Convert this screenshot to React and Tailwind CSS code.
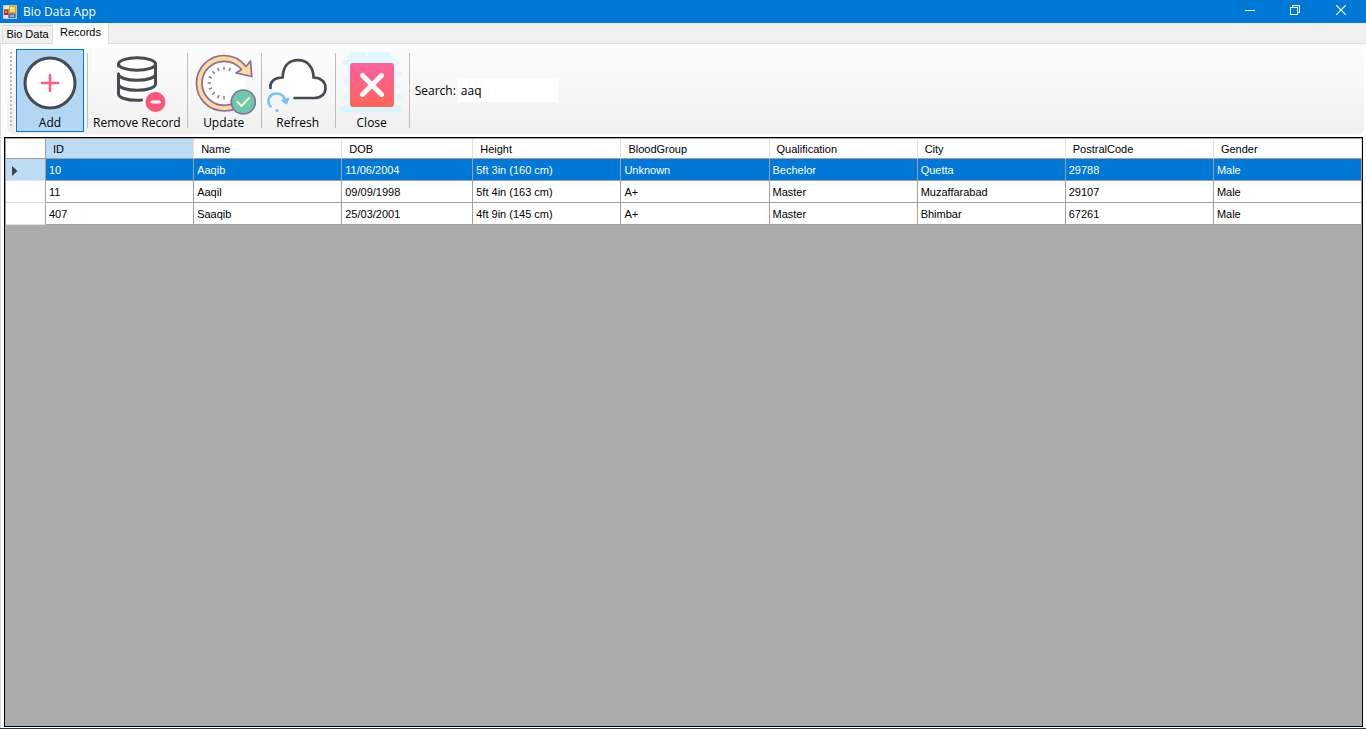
import React, { useState } from "react";

const columns = ["ID", "Name", "DOB", "Height", "BloodGroup", "Qualification", "City", "PostralCode", "Gender"];

const records = [
  ["10", "Aaqib", "11/06/2004", "5ft 3in (160 cm)", "Unknown", "Bechelor", "Quetta", "29788", "Male"],
  ["11", "Aaqil", "09/09/1998", "5ft 4in (163 cm)", "A+", "Master", "Muzaffarabad", "29107", "Male"],
  ["407", "Saaqib", "25/03/2001", "4ft 9in (145 cm)", "A+", "Master", "Bhimbar", "67261", "Male"],
];

function AppIcon() {
  return (
    <svg viewBox="0 0 14 14" className="h-3.5 w-3.5" aria-hidden="true" shapeRendering="crispEdges">
      <rect width="14" height="14" fill="#c9c5bb" />
      <rect x="1" y="1" width="12" height="12" fill="#8f8b80" />
      <rect x="1" y="1" width="5" height="3" fill="#e8e6df" />
      <rect x="1" y="10" width="4" height="3" fill="#e8e6df" />
      <rect x="1" y="5" width="4" height="5" fill="#c02a1c" />
      <rect x="2" y="6" width="2" height="2" fill="#f0907e" />
      <rect x="6" y="1" width="7" height="7" fill="#e5a800" />
      <rect x="7" y="2" width="5" height="5" fill="#ffd84a" />
      <rect x="7" y="2" width="3" height="2" fill="#fff0a8" />
      <rect x="6" y="9" width="6" height="4" fill="#3f6fd0" />
      <rect x="7" y="10" width="4" height="2" fill="#86aef2" />
    </svg>
  );
}

function AddIcon() {
  return (
    <svg viewBox="18 51 64 64" className="h-16 w-16" fill="none" aria-hidden="true">
      <circle cx="50" cy="83" r="25" fill="#fff" stroke="#444b54" strokeWidth="3" />
      <path d="M50 75v16M42 83h16" stroke="#ff5d7d" strokeWidth="2.500" strokeLinecap="round" />
    </svg>
  );
}

function RemoveIcon() {
  return (
    <svg viewBox="105 51 64 64" className="h-16 w-16" fill="none" aria-hidden="true">
      <path d="M118.500 64v32c0 3 8 5 18 5l18-10V64z" fill="#fff" />
      <g stroke="#444b54" strokeWidth="3" strokeLinecap="round">
        <ellipse cx="137" cy="64" rx="18.500" ry="6.300" fill="#fff" />
        <path d="M155.500 64v20c0 3.600-8 6.300-18.500 6.300s-18.500-2.700-18.500-6.300" />
        <path d="M118.500 64v2M118.500 74v20c0 3.600 8 6.300 18.500 6.300 1.800 0 3 0 4.500-.2" />
        <path d="M118.500 74c0 3.600 8 6.300 18.500 6.300s18.500-2.700 18.500-6.300" />
      </g>
      <circle cx="155.500" cy="102" r="10" fill="#ff5576" />
      <path d="M152 102h7.500" stroke="#fff" strokeWidth="3" strokeLinecap="round" />
    </svg>
  );
}

function UpdateIcon() {
  return (
    <svg viewBox="192 51 64 64" className="h-16 w-16" fill="none" aria-hidden="true">
      <circle cx="224" cy="83" r="21" fill="#fff" />
      <path
        d="M224 55.500c9 0 17 4.500 22 11l4.500-5.500 1.300 15.500-15.800-3.500 5.500-3.500c-4-5-10.500-8.200-17.500-8.200-12 0-22 9.800-22 22s10 22 22 22c4 0 7-.7 10-2l2 5.500c-3.500 1.500-7.500 2.200-12 2.200-15.300 0-27.500-12.400-27.500-27.700S208.700 55.500 224 55.500z"
        fill="#fbdc9d"
        stroke="#8d6a9d"
        strokeWidth="1.700"
        strokeLinejoin="round"
      />
      <g stroke="#8d6a9d" strokeWidth="1.400">
        {[22.5, 0, -22.5, -45, -67.5, -90, -112.5, -135, -157.5, -180].map((angle) => (
          <path key={angle} d="M224 66.500v3.500" transform={`rotate(${angle} 224 83)`} />
        ))}
      </g>
      <circle cx="243.300" cy="102" r="12" fill="#6cc9ab" stroke="#8d6a9d" strokeWidth="1.700" />
      <path d="M237.500 102l4 4 7.500-8" stroke="#fff4d8" strokeWidth="2" strokeLinecap="round" strokeLinejoin="round" />
    </svg>
  );
}

function RefreshIcon() {
  return (
    <svg viewBox="266 51 64 64" className="h-16 w-16" fill="none" aria-hidden="true">
      <path
        d="M270.500 88c-1-6 4-10.500 12.200-10.500C283 66 289 60.200 298 60.200c9 0 15.500 6.500 15.500 17.300 7.500 0 12 4.500 12 10.500s-4.500 10-11 10h-20z"
        fill="#fff"
      />
      <path
        d="M270.500 88c-1-6 4-10.500 12.200-10.500C283 66 289 60.200 298 60.200c9 0 15.500 6.500 15.500 17.300 7.500 0 12 4.500 12 10.500s-4.500 10-11 10h-20"
        stroke="#444b54"
        strokeWidth="2.700"
        strokeLinecap="round"
        strokeLinejoin="round"
      />
      <path d="M270.500 106.500c-4-5-2-13 6.500-13 4 0 6.500 2.500 8 6" stroke="#76c2f8" strokeWidth="2.600" strokeLinecap="round" />
      <path d="M281.500 100.500l7.500-2.500-2.500 6.200z" fill="#76c2f8" stroke="#76c2f8" strokeLinejoin="round" />
      <circle cx="277" cy="110.500" r="1.500" fill="#76c2f8" />
    </svg>
  );
}

function CloseIcon() {
  return (
    <svg viewBox="340 51 64 64" className="h-16 w-16" fill="none" aria-hidden="true">
      <defs>
        <linearGradient id="close-fill" x1="0" y1="0" x2="0" y2="1">
          <stop offset="0" stopColor="#fc629f" />
          <stop offset="1" stopColor="#ff6558" />
        </linearGradient>
      </defs>
      <rect x="347" y="56" width="49" height="53" fill="#e4f8ff" />
      <g stroke="#dff7ff" strokeWidth="5" strokeLinecap="round">
        <path d="M370 54.500h18" />
        <path d="M351 54.500h13" />
        <path d="M345 62.500h52M394 74h6M346 81h4M394 86h3M394 97h6M345 98h5" />
      </g>
      <path d="M343.500 109h55" stroke="#d9f6ff" strokeWidth="7" strokeLinecap="round" />
      <g stroke="#fafafa" strokeWidth="3" strokeLinecap="round">
        <path d="M345 73h2M345 89h2M397 91.500h3M397 80h3M397 68h3M396 57.500h-3" />
      </g>
      <rect x="350" y="63" width="44" height="44" rx="3" fill="url(#close-fill)" />
      <path d="M362.500 75.500l19 19M381.500 75.500l-19 19" stroke="#fff" strokeWidth="5" strokeLinecap="round" />
    </svg>
  );
}

const tools = [
  { label: "Add", Icon: AddIcon },
  { label: "Remove Record", Icon: RemoveIcon },
  { label: "Update", Icon: UpdateIcon },
  { label: "Refresh", Icon: RefreshIcon },
  { label: "Close", Icon: CloseIcon },
];

function TitleBar() {
  return (
    <header className="flex h-[23px] items-center bg-[#0078d7] pr-px pl-[3px] text-white">
      <AppIcon />
      <h1 className="ml-1.5 flex-1 text-xs">Bio Data App</h1>
      <button aria-label="Minimize" className="flex h-full w-[45px] items-center justify-center pb-1">
        <svg viewBox="0 0 10 10" className="h-2.5 w-2.5" shapeRendering="crispEdges">
          <path d="M0 5.500h10" stroke="#fff" />
        </svg>
      </button>
      <button aria-label="Restore" className="flex h-full w-[45px] items-center justify-center pb-1">
        <svg viewBox="0 0 10 10" className="h-2.5 w-2.5" fill="none" stroke="#fff" shapeRendering="crispEdges">
          <path d="M.5 2.500h7v7h-7zM2.500 2.500v-2h7v7h-2" />
        </svg>
      </button>
      <button aria-label="Close window" className="flex h-full w-[48px] items-center justify-center pb-1">
        <svg viewBox="0 0 10 10" className="h-2.5 w-2.5" stroke="#fff" strokeWidth="1.200">
          <path d="M0 0l10 10M10 0L0 10" />
        </svg>
      </button>
    </header>
  );
}

function Tabs() {
  return (
    <div role="tablist" className="flex h-[21px] items-end border-b border-[#dcdcdc] bg-[#f0f0f0] pl-0.5 font-['Liberation_Sans',sans-serif] text-[11px]">
      <button role="tab" aria-selected="false" className="h-[18px] w-[51px] border border-b-0 border-[#d9d9d9] whitespace-nowrap">
        Bio Data
      </button>
      <button role="tab" aria-selected="true" className="-mb-px h-[21px] w-14 border-r border-[#d9d9d9] bg-white pb-0.5 whitespace-nowrap">
        Records
      </button>
    </div>
  );
}

function Separator() {
  return (
    <div className="flex w-1.5 justify-center py-1">
      <div className="ml-px w-px bg-[#bdbdbd]" />
    </div>
  );
}

function Toolbar() {
  const [query, setQuery] = useState("aaq");
  return (
    <div role="toolbar" className="mr-0.5 ml-1.5 flex h-[86px] rounded-md bg-linear-to-b from-[#fcfcfc] via-[#f7f7f7] to-[#f0f0f0] pt-px pb-0.5">
      <svg className="mt-[3px] mr-1 ml-[3px] h-[76px] w-0.5" aria-hidden="true">
        <path d="M1 0v76" stroke="#b9b9b9" strokeWidth="2" strokeDasharray="2 2" />
      </svg>
      {tools.map(({ label, Icon }, i) => (
        <React.Fragment key={label}>
          <button
            className={
              "flex min-w-[68px] flex-col items-center border pt-px leading-4 " +
              (i === 0 ? "border-[#0078d7] bg-[#b3d7f3] px-px" : label.length > 8 ? "border-transparent px-0.5" : "border-transparent px-px")
            }
          >
            <Icon />
            <span className="whitespace-nowrap">{label}</span>
          </button>
          <Separator />
        </React.Fragment>
      ))}
      <label htmlFor="search" className="ml-[3px] self-center">
        Search:
      </label>
      <input
        id="search"
        value={query}
        onChange={(e) => setQuery(e.target.value)}
        className="ml-0.5 h-[23px] w-[100px] self-center bg-white px-[3px] outline-none"
      />
    </div>
  );
}

function RecordsGrid() {
  return (
    <div className="mx-[3px] mt-[3px] mb-px flex-1 border border-black bg-[#ababab]">
      <table className="w-full table-fixed border-separate border-spacing-0 border-t border-l border-[#a0a0a0] text-left font-['Liberation_Sans',sans-serif] text-[11px]">
        <colgroup>
          <col className="w-10" />
          <col />
          <col />
          <col className="w-[131px]" />
          <col span="6" />
        </colgroup>
        <thead>
          <tr className="h-5">
            <th aria-label="Row" className="border-r border-b border-[#a0a0a0] bg-white" />
            {columns.map((name, i) => (
              <th
                key={name}
                className={
                  "border-r border-b border-r-[#e2e2e2] border-b-[#a0a0a0] px-[7px] pt-0.5 pb-0 font-normal " +
                  (i === 0 ? "bg-[#bcdcf4]" : "bg-white")
                }
              >
                {name}
              </th>
            ))}
          </tr>
        </thead>
        <tbody>
          {records.map((row, r) => (
            <tr key={row[0]} className={"h-[22px] " + (r === 0 ? "bg-[#0078d7] text-white" : "bg-white text-black")}>
              <th
                scope="row"
                aria-label={"Record " + row[0]}
                className={"border-r border-b border-r-[#a0a0a0] border-b-[#e2e2e2] pt-0.5 pb-0 pl-1.5 " + (r === 0 ? "bg-[#bcdcf4]" : "bg-white")}
              >
                {r === 0 && (
                  <svg viewBox="0 0 6 10" className="block h-2.5 w-1.5" aria-hidden="true">
                    <path d="M0 0l5.500 5L0 10z" fill="#404040" />
                  </svg>
                )}
              </th>
              {row.map((value, c) => (
                <td key={c} className="border-r border-b border-[#a0a0a0] px-[3px] pt-0.5 pb-0 whitespace-nowrap">
                  {value}
                </td>
              ))}
            </tr>
          ))}
        </tbody>
      </table>
    </div>
  );
}

export default function App() {
  return (
    <div className="flex min-h-screen flex-col border-b border-[#21384a] bg-white font-['Open_Sans','Noto_Sans',sans-serif] text-xs text-black">
      <TitleBar />
      <Tabs />
      <main className="flex flex-1 flex-col border-l border-[#dcdcdc] pt-1">
        <Toolbar />
        <RecordsGrid />
      </main>
    </div>
  );
}
